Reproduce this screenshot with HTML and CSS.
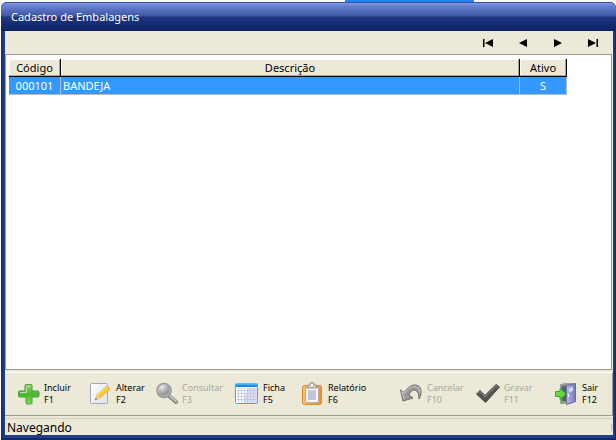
FILE: index.html
```html
<!DOCTYPE html>
<html lang="pt-BR">
<head>
<meta charset="utf-8">
<title>Cadastro de Embalagens</title>
<link rel="stylesheet" href="styles.css">
</head>
<body>
<div class="desktop"></div>
<main class="window">
  <h1 class="titlebar">Cadastro de Embalagens</h1>
  <div class="client">
    <nav class="navigator" aria-label="Registros">
      <button type="button" aria-label="Primeiro"><svg width="12" height="8" viewBox="0 0 12 8"><path d="M1 0h1.500v8H1zM11 0v8L3 4z"/></svg></button>
      <button type="button" aria-label="Anterior"><svg width="12" height="8" viewBox="0 0 12 8"><path d="M10 0v8L2 4z"/></svg></button>
      <button type="button" aria-label="Próximo"><svg width="12" height="8" viewBox="0 0 12 8"><path d="M2 0v8l8-4z"/></svg></button>
      <button type="button" aria-label="Último"><svg width="12" height="8" viewBox="0 0 12 8"><path d="M1 0v8l8-4zM9.500 0H11v8H9.500z"/></svg></button>
    </nav>
    <section class="records">
      <table class="grid">
        <colgroup><col class="col-code"><col><col class="col-active"></colgroup>
        <thead><tr><th>Código</th><th>Descrição</th><th>Ativo</th></tr></thead>
        <tbody><tr><td class="center">000101</td><td>BANDEJA</td><td class="center">S</td></tr></tbody>
      </table>
    </section>
    <div class="actions">
      <button type="button">
        <svg width="24" height="24" viewBox="0 0 24 24"><defs><linearGradient id="green" x2="0" y2="1"><stop stop-color="#91d875"/><stop offset=".5" stop-color="#4cb52d"/><stop offset="1" stop-color="#7ed957"/></linearGradient></defs><path d="M10 2.500h5q1 0 1 1V9h6q1 0 1 1v4q0 1-1 1h-6v6q0 1-1 1h-4q-1 0-1-1v-6H3.500q-1 0-1-1v-4q0-1 1-1H9V3.500q0-1 1-1z" fill="url(#green)" stroke="#4a9d3b"/><path d="M10.500 4h4M4 10.500h6.500V5" fill="none" stroke="#b7e8a2"/></svg>
        <span>Incluir<br>F1</span>
      </button>
      <button type="button">
        <svg width="24" height="24" viewBox="0 0 24 24"><defs><linearGradient id="paper" x2="1" y2="1"><stop stop-color="#fff"/><stop offset="1" stop-color="#dde1ed"/></linearGradient></defs><rect x="2.500" y="1.500" width="17" height="20" rx="1" fill="url(#paper)" stroke="#a6a8af"/><path d="M7 18l2-5L19 4l3 3-10 9z" fill="#f7c92f" stroke="#dba51f" stroke-width=".7"/><path d="M9.500 13.500L19.500 5" stroke="#fff07a"/><path d="M7 18l2-4.500 3 2.500z" fill="#ead5ad"/><path d="M7 18l1-2 1 1z" fill="#555"/></svg>
        <span>Alterar<br>F2</span>
      </button>
      <button type="button" disabled>
        <svg width="24" height="24" viewBox="0 0 24 24"><defs><radialGradient id="lens" cx=".35" cy=".25"><stop stop-color="#ededed"/><stop offset="1" stop-color="#999"/></radialGradient></defs><path d="M14 13l8 7" stroke="#808080" stroke-width="4" stroke-linecap="round"/><path d="M15 13l7 6.500" stroke="#c0c0c0" stroke-width="2" stroke-linecap="round"/><circle cx="10" cy="8.500" r="7" fill="url(#lens)" stroke="#969696" stroke-width="1.500"/><circle cx="10" cy="8.500" r="5.800" fill="none" stroke="#c8c8c8" stroke-width=".6"/></svg>
        <span>Consultar<br>F3</span>
      </button>
      <button type="button">
        <svg width="24" height="24" viewBox="0 0 24 24"><rect x=".5" y="1.500" width="22" height="20" rx="1" fill="#fff" stroke="#3caaf0"/><path d="M1 2h21v3H1z" fill="#158eeb"/><path d="M1 2h21" stroke="#83cdfc"/><path d="M13 6h9v15H8z" fill="#dedcf2"/><path d="M2 8.500h19M2 11.500h19M2 14.500h19M2 17.500h19M3.500 6v14M6.500 6v14M9.500 6v14M12.500 6v14M15.500 6v14M18.500 6v14" stroke="#c3c4d7" stroke-width=".8"/></svg>
        <span>Ficha<br>F5</span>
      </button>
      <button type="button">
        <svg width="24" height="24" viewBox="0 0 24 24"><defs><linearGradient id="orange" x2="1"><stop stop-color="#ffc06b"/><stop offset="1" stop-color="#ed951f"/></linearGradient></defs><rect x="2.500" y="3.500" width="19" height="19" rx="2" fill="url(#orange)" stroke="#db8b31"/><path d="M5.500 5.500h13v15h-13z" fill="#f8f8ff" stroke="#b8a89f"/><path d="M8 9h8M8 11h8" stroke="#9498ab"/><path d="M8 12h8v6H8z" fill="#bfc2e0"/><path d="M7.500 6V4q0-1 2-1 .5-2.500 2.500-2.500T14.500 3q2 0 2 1v2z" fill="#d3d3d3" stroke="#8a8a8a"/><circle cx="12" cy="3" r="1" fill="#fff"/></svg>
        <span>Relatório<br>F6</span>
      </button>
      <button type="button" disabled>
        <svg width="24" height="24" viewBox="0 0 24 24"><path d="M1.500 8l4 2.500C9 5 12 3 16 3c6 0 8 7 4 14 0-6-2-9-5-9-2 0-4 2-5 5l4 3-10 3z" fill="#999" stroke="#707070" stroke-linejoin="round"/><path d="M2.500 9l3.500 2.500C9 6 12 4 16 4.500q5 .5 5 6M3 10l2 7" fill="none" stroke="#ccc"/></svg>
        <span>Cancelar<br>F10</span>
      </button>
      <button type="button" disabled>
        <svg width="24" height="24" viewBox="0 0 24 24"><path d="M.5 12L4 8.500l5 5L20 2.500l3.500 2.500L9.500 20.500z" fill="#555" stroke="#454545" stroke-linejoin="round"/><path d="M1.500 12L4 9.500l5 5.500L20 4l2 1" fill="none" stroke="#8a8a8a"/></svg>
        <span>Gravar<br>F11</span>
      </button>
      <button type="button">
        <svg width="24" height="24" viewBox="0 0 24 24"><defs><linearGradient id="door" x2="1"><stop stop-color="#b9bbe5"/><stop offset="1" stop-color="#7479b5"/></linearGradient></defs><path d="M6.500 2.500l5-1h9.500v18l-8 2h-6.500z" fill="#8e9296" stroke="#9ba0a5"/><path d="M8 4h6v15H8z" fill="#59636d"/><path d="M12.500 3.500l9-2v18l-9 3z" fill="url(#door)" stroke="#686da8"/><path d="M15 6l4-1v4l-4 1z" fill="#d6d8f3"/><path d="M14.500 12v3" stroke="#fff"/><path d="M1.500 9.500H6v-3l6 5.500-6 5.500v-3H1.500z" fill="#68d83d" stroke="#3fa52a"/><path d="M7 19h4v2H7z" fill="#62c548"/></svg>
        <span>Sair<br>F12</span>
      </button>
    </div>
    <footer class="status"><span>Navegando</span><i class="divider"></i></footer>
  </div>
</main>
</body>
</html>
```
FILE: styles.css
```css
* { box-sizing: border-box; }

body {
  margin: 0;
  min-height: 100vh;
  display: flex;
  flex-direction: column;
  background: #fff;
  color: #000;
  font: 11px/16px "Noto Sans", sans-serif;
}

.desktop {
  height: 2px;
  background: linear-gradient(90deg, #f8f8fa 56%, #2684f0 56%, #2684f0 77%, #f8f8fa 77%);
}

.window {
  flex: 1;
  display: flex;
  flex-direction: column;
  margin-left: 1px;
  padding: 0 3px 5px 4px;
  border-radius: 6px 6px 0 0;
  background: linear-gradient(90deg, #14296b, #213e87 3px, #213e87 calc(100% - 3px), #14296b);
  box-shadow: inset 0 -2px #14296b;
}

.titlebar {
  height: 29px;
  margin: 0 -3px 0 -4px;
  padding: 0 10px;
  border-top: 1px solid #3655a8;
  border-radius: 6px 6px 0 0;
  background: linear-gradient(#8199e5, #6780cf 3px, #3c57a4 13px, #1e3881 14px, #0b2164);
  color: #fff;
  font-size: 11px;
  font-weight: 400;
  line-height: 28px;
}

.client {
  flex: 1;
  display: flex;
  flex-direction: column;
  background: #ece9d8;
}

button {
  margin: 0;
  padding: 0;
  border: 0;
  background: none;
  color: inherit;
  font: inherit;
}

svg { display: block; flex: none; }

.navigator {
  height: 23px;
  display: flex;
  align-items: center;
  justify-content: flex-end;
  gap: 23px;
  padding-right: 14px;
}

.records {
  flex: 1;
  margin-right: 1px;
  padding: 4px 44px 0 3px;
  border: 1px solid #9a998e;
  background: #fff;
}

.grid {
  width: 100%;
  table-layout: fixed;
  border-collapse: separate;
  border-spacing: 0;
}

.col-code { width: 52px; }
.col-active { width: 47px; }

th, td {
  height: 18px;
  padding: 0 2px;
  line-height: 16px;
  font-weight: 400;
}

th {
  border-right: 1px solid #000;
  border-bottom: 1px solid #000;
  background: #ece9d8;
  box-shadow: inset -1px -1px #aca899, inset 1px 1px #fbfaf6;
}

td {
  border-right: 1px solid #b8bcc2;
  border-bottom: 1px solid #b8bcc2;
  background: #3399ff;
  color: #fff;
}

.center { text-align: center; }

.actions {
  height: 44px;
  display: grid;
  grid-template-columns: 72fr 66fr 81fr 65fr 99fr 77fr 78fr 58fr;
  align-items: center;
  margin-top: 2px;
  padding-left: 11px;
  border-top: 1px solid #fff;
  border-right: 1px solid #9a998e;
  border-bottom: 1px solid #9a998e;
  font-size: 9px;
  line-height: 12px;
}

.actions button {
  display: flex;
  align-items: center;
  gap: 4px;
  text-align: left;
}

.actions button:disabled { color: #aaa79b; }

.status {
  height: 17px;
  display: flex;
  justify-content: space-between;
  align-items: center;
  margin-top: 2px;
  padding: 0 1px 0 2px;
  border-top: 1px solid #d2cfbf;
  font-size: 12px;
  line-height: 15px;
}

.divider {
  width: 1px;
  height: 7px;
  background: #c4c1b1;
}
```
